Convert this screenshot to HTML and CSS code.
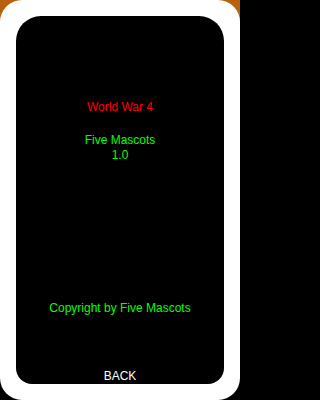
FILE: index.html
```html
<!DOCTYPE html>
<html>
<head>
<meta charset="utf-8">
<link rel="stylesheet" href="styles.css">
</head>
<body>
<div class="backdrop">
  <div class="frame">
    <div class="screen">
      <div class="title">World War 4</div>
      <div class="company">Five Mascots</div>
      <div class="version">1.0</div>
      <div class="copyright">Copyright by Five Mascots</div>
      <div class="back">BACK</div>
    </div>
  </div>
</div>
</body>
</html>
```
FILE: styles.css
```css
html, body {
  margin: 0;
  padding: 0;
  background: #000;
}
.backdrop {
  width: 240px;
  height: 400px;
  background: linear-gradient(to bottom, #b8620e 0, #a0500c 50%, #000 50%, #000 100%);
}
.frame {
  width: 240px;
  height: 400px;
  box-sizing: border-box;
  background: #fff;
  border-radius: 22px;
  padding: 16px 16px 16px 16px;
}
.screen {
  height: 368px;
  background: #000;
  border-radius: 25px 25px 16px 16px;
  display: flex;
  flex-direction: column;
  align-items: center;
  box-sizing: border-box;
  padding-top: 84px;
  font-family: "Liberation Sans", Arial, sans-serif;
  font-size: 12px;
  line-height: 15px;
}
.title {
  color: #ff0000;
}
.company {
  color: #00ff00;
  margin-top: 18px;
}
.version {
  color: #00ff00;
}
.copyright {
  color: #00ff00;
  margin-top: auto;
}
.back {
  color: #fff;
  margin-top: 53px;
}
```
